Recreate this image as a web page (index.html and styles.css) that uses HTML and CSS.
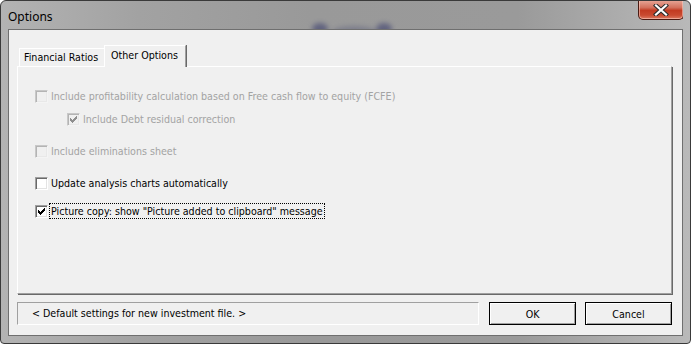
FILE: index.html
```html
<!DOCTYPE html>
<html>
  <head>
    <meta charset="utf-8">
    <title>Options</title>
    <link rel="stylesheet" href="styles.css">
  </head>
  <body>
    <div class="window">
      <div class="titlebar">
        <span class="title">Options</span>
        <span class="behind"><i class="blob b1"></i><i class="blob b2"></i><i class="blob b3"></i></span>
        <button class="close" title="Close">
          <svg width="16" height="12" viewBox="0 0 16 12">
            <path d="M3 1.5 L13 10.5 M13 1.5 L3 10.5" stroke="#2b2b2b" stroke-width="4.2" stroke-linecap="square"/>
            <path d="M3 1.5 L13 10.5 M13 1.5 L3 10.5" stroke="#fff" stroke-width="2.2" stroke-linecap="square"/>
          </svg>
        </button>
      </div>
      <div class="client">
        <div class="tabs">
          <div class="tab">Financial Ratios</div>
          <div class="tab active">Other Options</div>
        </div>
        <div class="panel">
          <div class="row r1 disabled"><span class="box"></span><span class="label">Include profitability calculation based on Free cash flow to equity (FCFE)</span></div>
          <div class="row r2 nested disabled"><span class="box checked"></span><span class="label">Include Debt residual correction</span></div>
          <div class="row r3 disabled"><span class="box"></span><span class="label">Include eliminations sheet</span></div>
          <div class="row r4"><span class="box"></span><span class="label">Update analysis charts automatically</span></div>
          <div class="row r5"><span class="box checked"></span><span class="label focus">Picture copy: show "Picture added to clipboard" message</span></div>
        </div>
        <div class="footer">
          <div class="status">&lt; Default settings for new investment file. &gt;</div>
          <button class="btn">OK</button>
          <button class="btn">Cancel</button>
        </div>
      </div>
    </div>
  </body>
</html>
```

FILE: styles.css
```css
html, body {
  margin: 0;
  background: #fff;
}

.window {
  width: 691px;
  height: 344px;
  box-sizing: border-box;
  display: flex;
  flex-direction: column;
  padding: 0 7px 7px 7px;
  border: 1px solid #3a3a3a;
  border-radius: 6px 6px 4px 4px;
  background: linear-gradient(to right, #b3b3b3, #a2a2a2 20%, #999 45%, #9a9a9a 75%, #b9b9b9);
  font-family: "DejaVu Sans Condensed", "Liberation Sans", sans-serif;
  font-size: 10.6px;
  color: #000;
}

.titlebar {
  height: 28px;
  position: relative;
  display: flex;
  align-items: center;
  flex-shrink: 0;
  overflow: hidden;
}

.title {
  font-family: "Noto Sans", sans-serif;
  font-size: 12px;
  color: #000;
  padding-top: 2px;
}

/* blurred window behind the glass */
.behind {
  position: absolute;
  left: 300px;
  top: 20px;
  width: 90px;
  height: 16px;
  filter: blur(2.5px);
  opacity: 0.6;
}

.blob {
  position: absolute;
  top: 2px;
  height: 12px;
  border-radius: 50%;
  background: #3c3f6e;
}

.b1 { left: 4px; width: 16px; }
.b2 { left: 24px; width: 44px; opacity: 0.5; top: 5px; }
.b3 { left: 68px; width: 16px; }

.close {
  position: absolute;
  right: -1px;
  top: -1px;
  width: 46px;
  height: 20px;
  padding: 0;
  border: 1px solid #4a1a12;
  border-top: none;
  border-radius: 0 0 5px 5px;
  background: linear-gradient(to bottom, #e9a99a, #d3705c 40%, #c23b22 55%, #c94a30 80%, #dc7a62);
  box-shadow: inset 0 0 0 1px rgba(255, 220, 210, 0.5);
  display: flex;
  align-items: center;
  justify-content: center;
}

.client {
  flex: 1;
  display: flex;
  flex-direction: column;
  background: #f0f0f0;
  border: 1px solid #6f6f6f;
  padding: 15px 10px 10px 8px;
}

.tabs {
  display: flex;
  align-items: flex-end;
  height: 21px;
  padding-left: 2px;
  position: relative;
  z-index: 1;
}

.tab {
  height: 17px;
  padding: 0 6px 0 4px;
  line-height: 17px;
  border-top: 1px solid #fff;
  border-left: 1px solid #fff;
  border-right: 1px solid #a0a0a0;
  box-shadow: 1px 0 0 #696969;
  background: #f0f0f0;
}

.tab.active {
  height: 21px;
  line-height: 19px;
  margin-left: -1px;
  margin-bottom: -1px;
  padding: 0 7px 0 6px;
}

.panel {
  flex: 1;
  border-top: 1px solid #fff;
  border-left: 1px solid #fff;
  border-right: 1px solid #a0a0a0;
  border-bottom: 1px solid #a0a0a0;
  box-shadow: 1px 1px 0 #696969;
  padding: 20px 0 0 17px;
}

.row {
  display: flex;
  align-items: center;
  height: 18px;
}

.r2 { margin-top: 5px; }
.r3 { margin-top: 14px; }
.r4 { margin-top: 14px; }
.r5 { margin-top: 10px; }

.nested {
  padding-left: 32px;
}

.box {
  width: 13px;
  height: 13px;
  box-sizing: border-box;
  border: 1px solid;
  border-color: #a0a0a0 #fff #fff #a0a0a0;
  box-shadow: inset 1px 1px 0 #696969, inset -1px -1px 0 #e3e3e3;
  background: #fff;
  position: relative;
  flex-shrink: 0;
}

.box.checked::after {
  content: "";
  position: absolute;
  left: 2px;
  top: 2px;
  width: 7px;
  height: 7px;
  background: linear-gradient(#000, #000) 0 2px / 1px 3px no-repeat,
              linear-gradient(#000, #000) 1px 3px / 1px 3px no-repeat,
              linear-gradient(#000, #000) 2px 4px / 1px 3px no-repeat,
              linear-gradient(#000, #000) 3px 3px / 1px 3px no-repeat,
              linear-gradient(#000, #000) 4px 2px / 1px 3px no-repeat,
              linear-gradient(#000, #000) 5px 1px / 1px 3px no-repeat,
              linear-gradient(#000, #000) 6px 0 / 1px 3px no-repeat;
}

.disabled .box {
  border-color: #c8c8c8 #f4f4f4 #f4f4f4 #c8c8c8;
  box-shadow: inset 1px 1px 0 #b4b4b4, inset -1px -1px 0 #e8e8e8;
  background: #f0f0f0;
}

.disabled .box.checked::after {
  opacity: 0.4;
}

.label {
  margin-left: 1px;
  padding: 1px 1px;
  border: 1px dotted transparent;
  white-space: nowrap;
}

.disabled .label {
  color: #a3a3a3;
}

.label.focus {
  border-color: #000;
}

.footer {
  display: flex;
  height: 23px;
  margin-top: 8px;
}

.status {
  flex: 1;
  border: 1px solid;
  border-color: #a0a0a0 #fff #fff #a0a0a0;
  padding-left: 14px;
  line-height: 21px;
  margin-right: 10px;
}

.btn {
  width: 87px;
  height: 23px;
  margin-left: 9px;
  padding: 0;
  font: inherit;
  color: #000;
  background: #f0f0f0;
  border: 1px solid #000;
  box-shadow: inset 1px 1px 0 #fff, inset -1px -1px 0 #a0a0a0;
}

.status + .btn {
  margin-left: 0;
}
```
